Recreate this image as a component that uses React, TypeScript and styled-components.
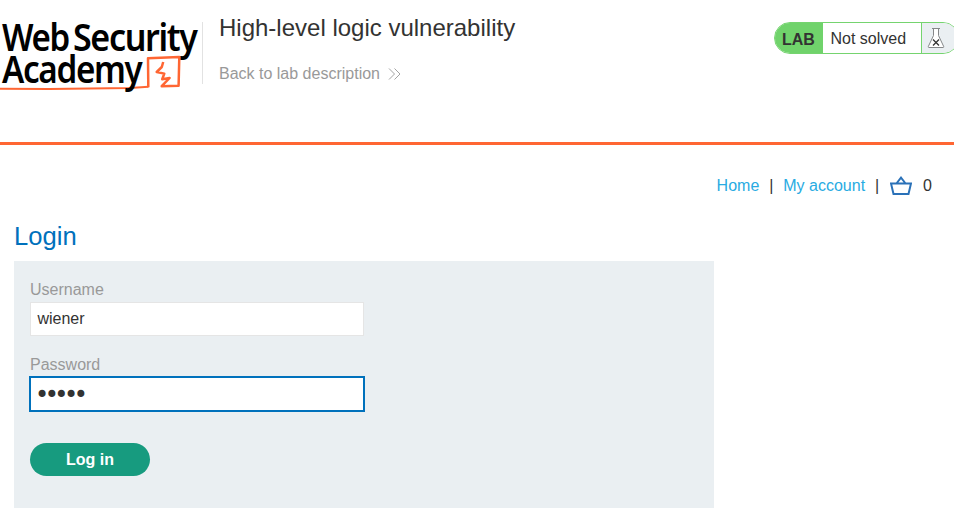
import React from "react";
import styled, { createGlobalStyle } from "styled-components";

const GlobalStyle = createGlobalStyle`
  * { box-sizing: border-box; }
  body {
    margin: 0;
    background: #fff;
    color: #333332;
    font: 16px/20px "Liberation Sans", Arial, sans-serif;
    overflow: hidden;
  }
`;

const Page = styled.div`
  height: 527px;
  overflow: hidden;
`;

const Header = styled.header`
  display: flex;
  height: 145px;
  border-bottom: 3px solid #ff6633;
`;

const LogoBox = styled.div`
  width: 203px;
  height: 62px;
  margin-top: 22px;
  border-right: 1px solid #e2e2e2;
  flex: none;
  svg { display: block; overflow: visible; }
`;

const LogoText = styled.text`
  font-family: "Noto Sans", sans-serif;
  font-weight: 600;
  font-size: 37.5px;
  letter-spacing: -1.5px;
  fill: #000;
`;

const Titles = styled.div`
  flex: 1;
  padding: 13px 0 0 16px;
`;

const Title = styled.h2`
  margin: 0 0 21px;
  font-size: 24px;
  line-height: 30px;
  font-weight: 400;
`;

const BackLink = styled.a`
  display: flex;
  align-items: center;
  gap: 8px;
  color: #999;
  svg { margin-top: -1px; }
`;

const Status = styled.div`
  display: flex;
  flex: none;
  width: 185px;
  height: 32px;
  margin: 22px -5px 0 0;
  border: 1px solid #75d46f;
  border-radius: 16px;
  overflow: hidden;
`;

const StatusLabel = styled.span`
  width: 48px;
  padding: 7px 0 0 7px;
  background: #70d36b;
  font-weight: 700;
`;

const StatusText = styled.span`
  width: 99px;
  padding: 6px 0 0 7.5px;
  border-right: 1px solid #75d46f;
`;

const StatusIcon = styled.span`
  flex: 1;
  padding: 5px 0 0 5px;
  background: #eaeff2;
  svg { display: block; }
`;

const Nav = styled.nav`
  display: flex;
  justify-content: flex-end;
  height: 62px;
  padding: 31px 22px 0 0;
`;

const NavLink = styled.a`
  color: #29abe2;
`;

const Divider = styled.span`
  width: 24px;
  text-align: center;
`;

const BasketLink = styled.a`
  display: flex;
  gap: 11px;
  margin-left: 1px;
`;

const Main = styled.main`
  padding: 14px 0 0 14px;
`;

const Heading = styled.h1`
  margin: 0 0 10px;
  color: #0071bc;
  font-size: 25.6px;
  line-height: 30px;
  font-weight: 400;
`;

const Form = styled.form`
  width: 700px;
  height: 247px;
  padding: 19px 16px;
  background: #eaeff2;
`;

const Label = styled.label`
  display: block;
  height: 22px;
  color: #999;
`;

const Input = styled.input`
  display: block;
  width: 334px;
  height: 34px;
  margin: 0 0 19px;
  padding: 0 6.4px 1px;
  border: 1px solid #e5e5e5;
  border-radius: 0;
  background: #fff;
  color: #333332;
  font: 16px "Liberation Sans", Arial, sans-serif;
  outline: none;
`;

const PasswordInput = styled(Input)`
  width: 336px;
  height: 36px;
  margin: -1px -1px 31px;
  padding: 2px 4px 0;
  border: 2px solid #0071bc;
  font: 24px "DejaVu Sans", sans-serif;
  letter-spacing: -4.5px;
`;

const Submit = styled.button`
  display: block;
  width: 120px;
  height: 33px;
  padding: 0;
  border: 0;
  border-radius: 17px;
  background: #179b7f;
  color: #fff;
  font: 700 16px "Liberation Sans", Arial, sans-serif;
`;

const Logo = () => (
  <svg width="202" height="72" viewBox="0 0 202 72">
    <LogoText x="2" y="28.6" textLength="67" lengthAdjust="spacingAndGlyphs">Web</LogoText>
    <LogoText x="73" y="28.6" textLength="123.5" lengthAdjust="spacingAndGlyphs">Security</LogoText>
    <g fill="none" stroke="#ff6633" strokeLinejoin="round">
      <path d="M0 66.7 49 67.1 130 66l18.5-1.2" strokeWidth="2" />
      <path d="M148.3 65.3 148 36.2 179.3 35 178.6 63.8 161.7 64.2 169.6 56 162.2 57.3 164.3 51.6 156.7 50 161.8 45 163.2 40" strokeWidth="2.5" />
    </g>
    <LogoText x="2" y="61.3" textLength="139.5" lengthAdjust="spacingAndGlyphs">Academy</LogoText>
  </svg>
);

const DoubleChevron = () => (
  <svg width="13" height="12" viewBox="0 0 13 12" fill="none" stroke="#999" strokeWidth="0.9">
    <path d="m1 0.5 5.5 5.5L1 11.5M6.5 0.5 12 6l-5.5 5.5" />
  </svg>
);

const Flask = () => (
  <svg width="18" height="20" viewBox="0 0 18 20" fill="none">
    <path d="M5 .5h8M6.5 .5v7L1.3 18.5q-.2 1 .7 1h14q.9 0 .7-1L11.5 7.5V.5" fill="#fff" stroke="#858789" />
    <path d="m6 11.5 6 6m0-6-6 6" stroke="#333" strokeWidth="1.3" />
  </svg>
);

const Basket = () => (
  <svg width="22" height="20" viewBox="0 0 22 20" fill="none" stroke="#2a71b8" strokeWidth="2">
    <path d="M1 7.5h20L18.5 18h-15zM6.8 7 11 1.7 15.2 7" />
  </svg>
);

export default function App() {
  return (
    <Page>
      <GlobalStyle />
      <Header>
        <LogoBox><Logo /></LogoBox>
        <Titles>
          <Title>High-level logic vulnerability</Title>
          <BackLink>Back to lab description <DoubleChevron /></BackLink>
        </Titles>
        <Status>
          <StatusLabel>LAB</StatusLabel>
          <StatusText>Not solved</StatusText>
          <StatusIcon><Flask /></StatusIcon>
        </Status>
      </Header>
      <Nav>
        <NavLink>Home</NavLink>
        <Divider>|</Divider>
        <NavLink>My account</NavLink>
        <Divider>|</Divider>
        <BasketLink><Basket /><span>0</span></BasketLink>
      </Nav>
      <Main>
        <Heading>Login</Heading>
        <Form>
          <Label htmlFor="username">Username</Label>
          <Input id="username" defaultValue="wiener" />
          <Label htmlFor="password">Password</Label>
          <PasswordInput id="password" type="password" defaultValue="peter" />
          <Submit type="button">Log in</Submit>
        </Form>
      </Main>
    </Page>
  );
}
